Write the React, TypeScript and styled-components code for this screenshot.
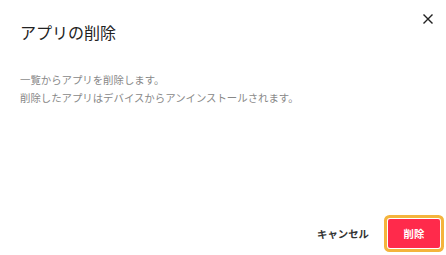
import styled, { createGlobalStyle } from "styled-components";

const GlobalStyle = createGlobalStyle`
  html, body {
    margin: 0;
    padding: 0;
    background: #ffffff;
  }
  body {
    font-family: "Noto Sans CJK JP", "Noto Sans", sans-serif;
  }
`;

export default function App() {
  return (
    <>
      <GlobalStyle />
      <DialogSld>
        <HeaderSld>
          <TitleSld>アプリの削除</TitleSld>
          <CloseSld aria-label="閉じる">
            <svg width="10" height="10" viewBox="0 0 10 10">
              <path
                d="M1 1 L9 9 M9 1 L1 9"
                stroke="#222"
                strokeWidth="1.4"
                strokeLinecap="square"
              />
            </svg>
          </CloseSld>
        </HeaderSld>
        <BodySld>
          <TextSld>一覧からアプリを削除します。</TextSld>
          <TextSld>削除したアプリはデバイスからアンインストールされます。</TextSld>
        </BodySld>
        <FooterSld>
          <CancelSld>キャンセル</CancelSld>
          <DeleteSld>削除</DeleteSld>
        </FooterSld>
      </DialogSld>
    </>
  );
}

const DialogSld = styled.div`
  width: 446px;
  height: 255px;
  display: flex;
  flex-direction: column;
  box-sizing: border-box;
  background: #fff;
`;

const HeaderSld = styled.div`
  display: flex;
  justify-content: space-between;
  align-items: flex-start;
  padding: 13px 12px 0 20px;
`;

const TitleSld = styled.h2`
  margin: 7px 0 0;
  font-size: 16px;
  line-height: 24px;
  font-weight: 400;
  color: #222;
`;

const CloseSld = styled.button`
  border: none;
  background: none;
  padding: 0;
  width: 12px;
  height: 12px;
  display: flex;
  align-items: center;
  justify-content: center;
  cursor: pointer;
`;

const BodySld = styled.div`
  padding: 27px 20px 0;
  flex: 1;
`;

const TextSld = styled.p`
  margin: 0;
  font-size: 10.4px;
  line-height: 18px;
  color: #888;
`;

const FooterSld = styled.div`
  display: flex;
  justify-content: flex-end;
  align-items: center;
  gap: 11px;
  padding: 0 6px 7px 0;
`;

const CancelSld = styled.button`
  border: none;
  background: none;
  padding: 0 8px;
  height: 29px;
  font-family: inherit;
  font-size: 10.4px;
  font-weight: 700;
  color: #333;
  cursor: pointer;
`;

const DeleteSld = styled.button`
  border: none;
  border-radius: 2px;
  width: 52px;
  height: 29px;
  background: #ff2a4b;
  color: #fff;
  font-family: inherit;
  font-size: 10.4px;
  font-weight: 700;
  cursor: pointer;
  box-shadow: 0 0 0 1px #fff, 0 0 0 4px #f4b43c;
`;
